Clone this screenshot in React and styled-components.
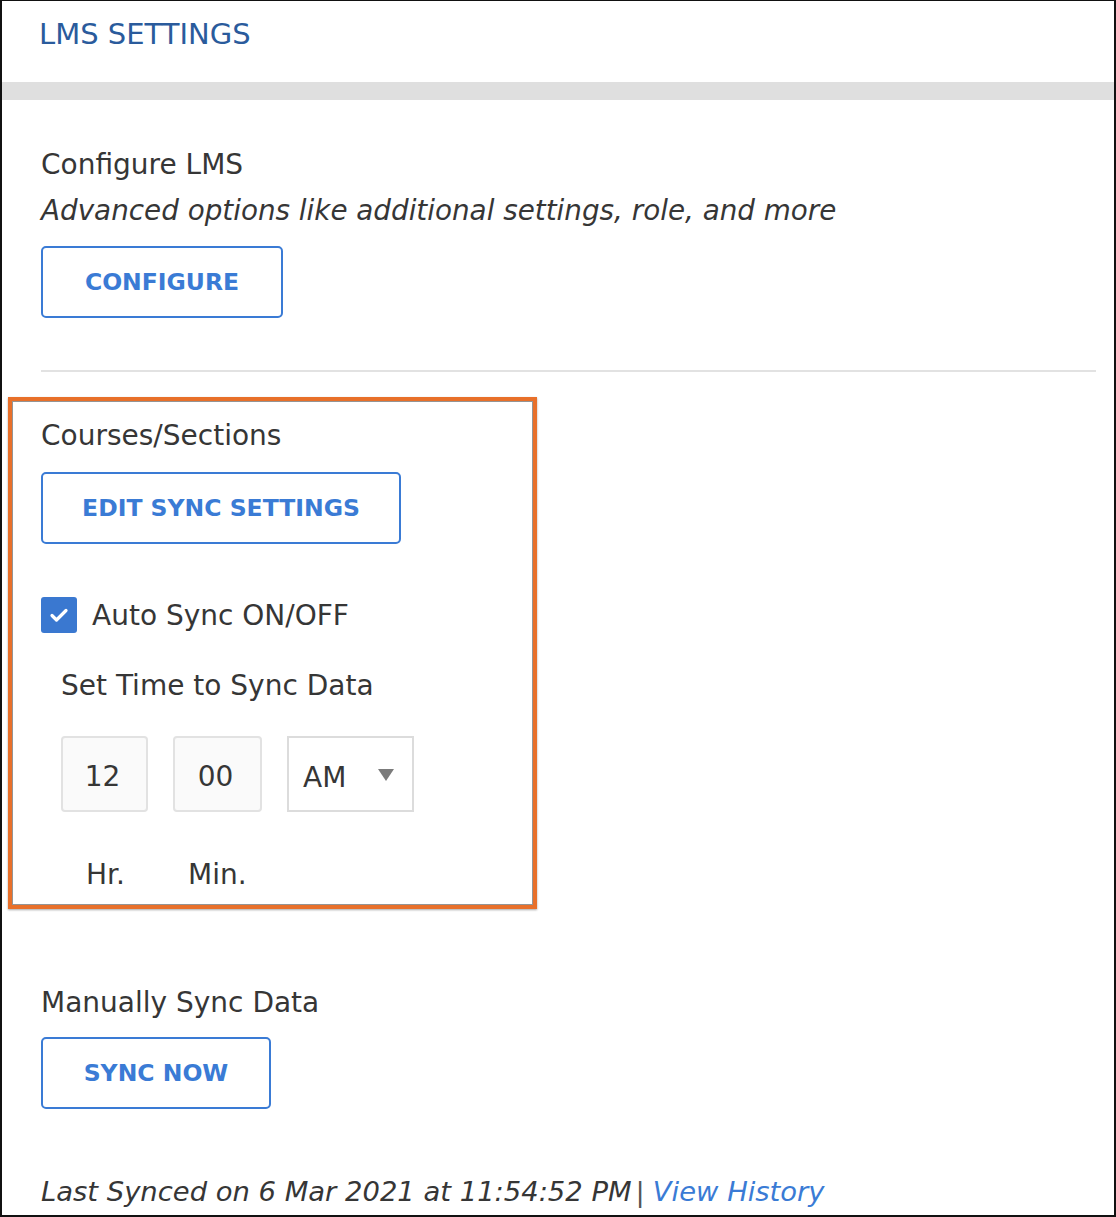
import React from "react";
import styled, { createGlobalStyle } from "styled-components";

const FONT = `"DejaVu Sans", Lato, Arial, sans-serif`;

const Global = createGlobalStyle`
  html, body { margin: 0; padding: 0; background: #fff; }
  body { font-family: ${FONT}; }
  * { box-sizing: border-box; }
`;

const Frame = styled.div`
  width: 1116px;
  height: 1217px;
  overflow: hidden;
  border-style: solid;
  border-color: #111;
  border-width: 1px 2px 2px 2px;
  background: #fff;
  display: flex;
  flex-direction: column;
`;

const Header = styled.header`
  height: 81px;
  padding: 16px 0 0 37px;
`;

const Title = styled.h1`
  margin: 0;
  font-weight: 400;
  font-size: 29px;
  line-height: 34px;
  color: #2a5b9c;
`;

const GrayBar = styled.div`
  height: 18px;
  background: #dfdfdf;
`;

const Content = styled.main`
  padding: 0 18px 0 39px;
  display: flex;
  flex-direction: column;
`;

const Section = styled.section`
  display: flex;
  flex-direction: column;
  align-items: flex-start;
  padding-top: ${(p) => p.$top || 0}px;
`;

const Heading = styled.div`
  font-size: 28px;
  line-height: 34px;
  color: #363636;
`;

const Sub = styled.div`
  font-size: 27.8px;
  line-height: 34px;
  font-style: italic;
  color: #363636;
  margin-top: 12px;
`;

const OutlineButton = styled.button`
  margin-top: ${(p) => p.$mt || 20}px;
  height: 72px;
  width: ${(p) => p.$w}px;
  border: 2px solid #3a7bd5;
  border-radius: 5px;
  background: #fff;
  color: #3a7bd5;
  font-family: ${FONT};
  font-weight: 700;
  font-size: 23.5px;
  padding: 0;
  cursor: pointer;
`;

const Divider = styled.hr`
  margin: 52px 0 0 0;
  border: none;
  border-top: 2px solid #e2e2e2;
  width: 100%;
`;

const Highlight = styled.div`
  margin: 25px 0 0 -33px;
  width: 529px;
  height: 512px;
  border: 4px solid #e8702a;
  box-shadow: inset 0 0 0 1px rgba(60, 60, 60, 0.55), 0 1px 2px rgba(0, 0, 0, 0.35);
  padding: 18px 0 0 29px;
  display: flex;
  flex-direction: column;
  align-items: flex-start;
`;

const CheckRow = styled.label`
  display: flex;
  align-items: center;
  gap: 15px;
  margin-top: 53px;
  font-size: 28px;
  color: #363636;
`;

const CheckBox = styled.span`
  width: 36px;
  height: 36px;
  border-radius: 3px;
  background: #3a78d0;
  display: flex;
  align-items: center;
  justify-content: center;
`;

const TimeBlock = styled.div`
  padding-left: 20px;
  display: flex;
  flex-direction: column;
  align-items: flex-start;
`;

const TimeLabel = styled.div`
  margin-top: 36px;
  font-size: 28px;
  line-height: 34px;
  color: #363636;
`;

const TimeRow = styled.div`
  display: flex;
  gap: 25px;
  margin-top: 33px;
`;

const TimeInput = styled.div`
  width: ${(p) => p.$w}px;
  height: 76px;
  border: 2px solid #e2e2e2;
  border-radius: 4px;
  background: #fafafa;
  display: flex;
  align-items: center;
  justify-content: center;
  font-size: 28px;
  color: #363636;
  padding: 4px 4px 0 0;
`;

const Select = styled.div`
  width: 127px;
  height: 76px;
  border: 2px solid #dcdcdc;
  background: #fff;
  display: flex;
  align-items: center;
  justify-content: space-between;
  padding: 6px 18px 0 14px;
  font-size: 28px;
  color: #363636;
`;

const Caret = styled.span`
  width: 0;
  height: 0;
  border-left: 8px solid transparent;
  border-right: 8px solid transparent;
  border-top: 12px solid #7b7b7b;
  margin-bottom: 4px;
`;

const UnitRow = styled.div`
  display: flex;
  margin-top: 46px;
  font-size: 28px;
  color: #363636;
  padding-left: 45px;
`;

const Unit = styled.span`
  width: ${(p) => p.$w}px;
`;

const Footer = styled.div`
  margin-top: 67px;
  font-size: 27.4px;
  font-style: italic;
  color: #363636;
`;

const Link = styled.a`
  color: #3a7bd5;
  text-decoration: none;
`;

const Sep = styled.span`
  font-style: normal;
  color: #555;
  margin: 0 8px 0 4px;
`;

export default function App() {
  return (
    <>
      <Global />
      <Frame>
        <Header>
          <Title>LMS SETTINGS</Title>
        </Header>
        <GrayBar />
        <Content>
          <Section $top={48}>
            <Heading>Configure LMS</Heading>
            <Sub>Advanced options like additional settings, role, and more</Sub>
            <OutlineButton $w={242} $mt={18}>CONFIGURE</OutlineButton>
          </Section>
          <Divider />
          <Highlight>
            <Heading>Courses/Sections</Heading>
            <OutlineButton $w={360} $mt={19}>EDIT SYNC SETTINGS</OutlineButton>
            <CheckRow>
              <CheckBox>
                <svg width="24" height="24" viewBox="0 0 24 24" fill="none">
                  <path d="M5 12.5l4.5 4.5L19 7.5" stroke="#fff" strokeWidth="3.2" strokeLinecap="round" strokeLinejoin="round" />
                </svg>
              </CheckBox>
              Auto Sync ON/OFF
            </CheckRow>
            <TimeBlock>
              <TimeLabel>Set Time to Sync Data</TimeLabel>
              <TimeRow>
                <TimeInput $w={87}>12</TimeInput>
                <TimeInput $w={89}>00</TimeInput>
                <Select>
                  AM
                  <Caret />
                </Select>
              </TimeRow>
            </TimeBlock>
            <UnitRow>
              <Unit $w={102}>Hr.</Unit>
              <Unit $w={70}>Min.</Unit>
            </UnitRow>
          </Highlight>
          <Section $top={77}>
            <Heading>Manually Sync Data</Heading>
            <OutlineButton $w={230} $mt={17}>SYNC NOW</OutlineButton>
          </Section>
          <Footer>
            Last Synced on 6 Mar 2021 at 11:54:52 PM<Sep>|</Sep>
            <Link href="#">View History</Link>
          </Footer>
        </Content>
      </Frame>
    </>
  );
}
